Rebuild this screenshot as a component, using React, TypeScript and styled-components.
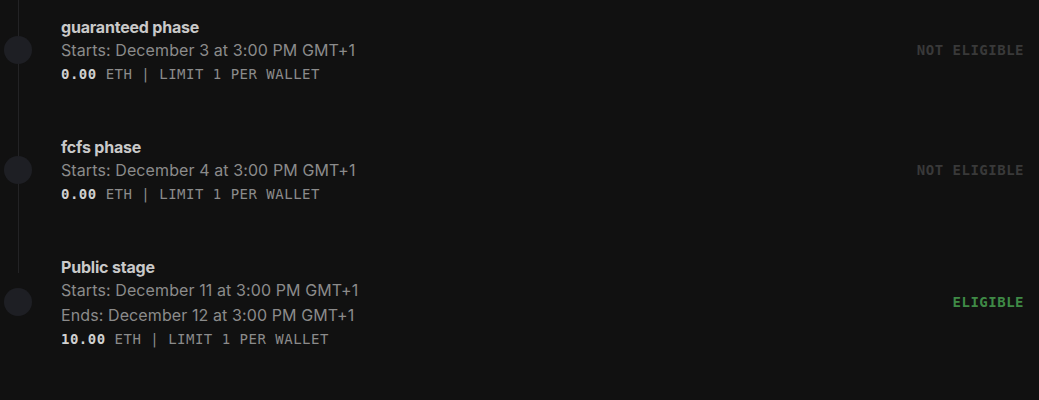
import { FC } from "react";
import styled, { createGlobalStyle } from "styled-components";

type Stage = {
  key: string;
  title: string;
  dates: string[];
  price: string;
  eligible: boolean;
};

const stages: Stage[] = [
  {
    key: "gtd",
    title: "guaranteed phase",
    dates: ["Starts: December 3 at 3:00 PM GMT+1"],
    price: "0.00",
    eligible: false,
  },
  {
    key: "fcfs",
    title: "fcfs phase",
    dates: ["Starts: December 4 at 3:00 PM GMT+1"],
    price: "0.00",
    eligible: false,
  },
  {
    key: "public",
    title: "Public stage",
    dates: [
      "Starts: December 11 at 3:00 PM GMT+1",
      "Ends: December 12 at 3:00 PM GMT+1",
    ],
    price: "10.00",
    eligible: true,
  },
];

const StageItem: FC<{ stage: Stage }> = ({ stage }) => (
  <Item>
    <Dot />
    <Fields>
      <Title>{stage.title}</Title>
      {stage.dates.map((d) => (
        <DateLine key={d}>{d}</DateLine>
      ))}
      <Price>
        <strong>{stage.price}</strong> ETH | LIMIT 1 PER WALLET
      </Price>
    </Fields>
    <Status $eligible={stage.eligible}>
      {stage.eligible ? "ELIGIBLE" : "NOT ELIGIBLE"}
    </Status>
  </Item>
);

export default function App() {
  return (
    <>
      <GlobalStyle />
      <Timeline>
        {stages.map((s) => (
          <StageItem key={s.key} stage={s} />
        ))}
      </Timeline>
    </>
  );
}

const GlobalStyle = createGlobalStyle`
  html, body {
    margin: 0;
    background: #111111;
    height: 100%;
  }
  body {
    font-family: Inter, "Noto Sans", sans-serif;
  }
`;

const Timeline = styled.div`
  position: relative;
  display: flex;
  flex-direction: column;
  row-gap: 49px;
  padding: 14px 15px 0 4px;

  &::before {
    content: "";
    position: absolute;
    left: 18px;
    top: 0;
    height: 273px;
    width: 1px;
    background: #232325;
  }
`;

const Item = styled.div`
  display: flex;
  flex-direction: row;
  align-items: center;
`;

const Dot = styled.div`
  width: 28px;
  height: 28px;
  border-radius: 50%;
  background: #1e1f24;
  flex-shrink: 0;
  margin-right: 29px;
  position: relative;
`;

const Fields = styled.div`
  display: flex;
  flex-direction: column;
  flex: 1;
`;

const Title = styled.div`
  font-size: 16px;
  font-weight: 700;
  letter-spacing: -0.2px;
  line-height: 24px;
  padding-top: 1px;
  margin-bottom: -1px;
  color: #c9c9c9;
`;

const DateLine = styled.div`
  font-size: 16px;
  letter-spacing: 0.1px;
  line-height: 25px;
  color: #8b8b8b;
`;

const Mono = styled.div`
  font-family: "DejaVu Sans Mono", "Liberation Mono", monospace;
  font-size: 14px;
  letter-spacing: 0.5px;
`;

const Price = styled(Mono)`
  line-height: 22px;
  color: #8b8b8b;

  strong {
    color: #d0d0d0;
    font-weight: 700;
  }
`;

const Status = styled(Mono)<{ $eligible: boolean }>`
  font-weight: 700;
  color: ${(p) => (p.$eligible ? "#3f8a46" : "#393939")};
`;
